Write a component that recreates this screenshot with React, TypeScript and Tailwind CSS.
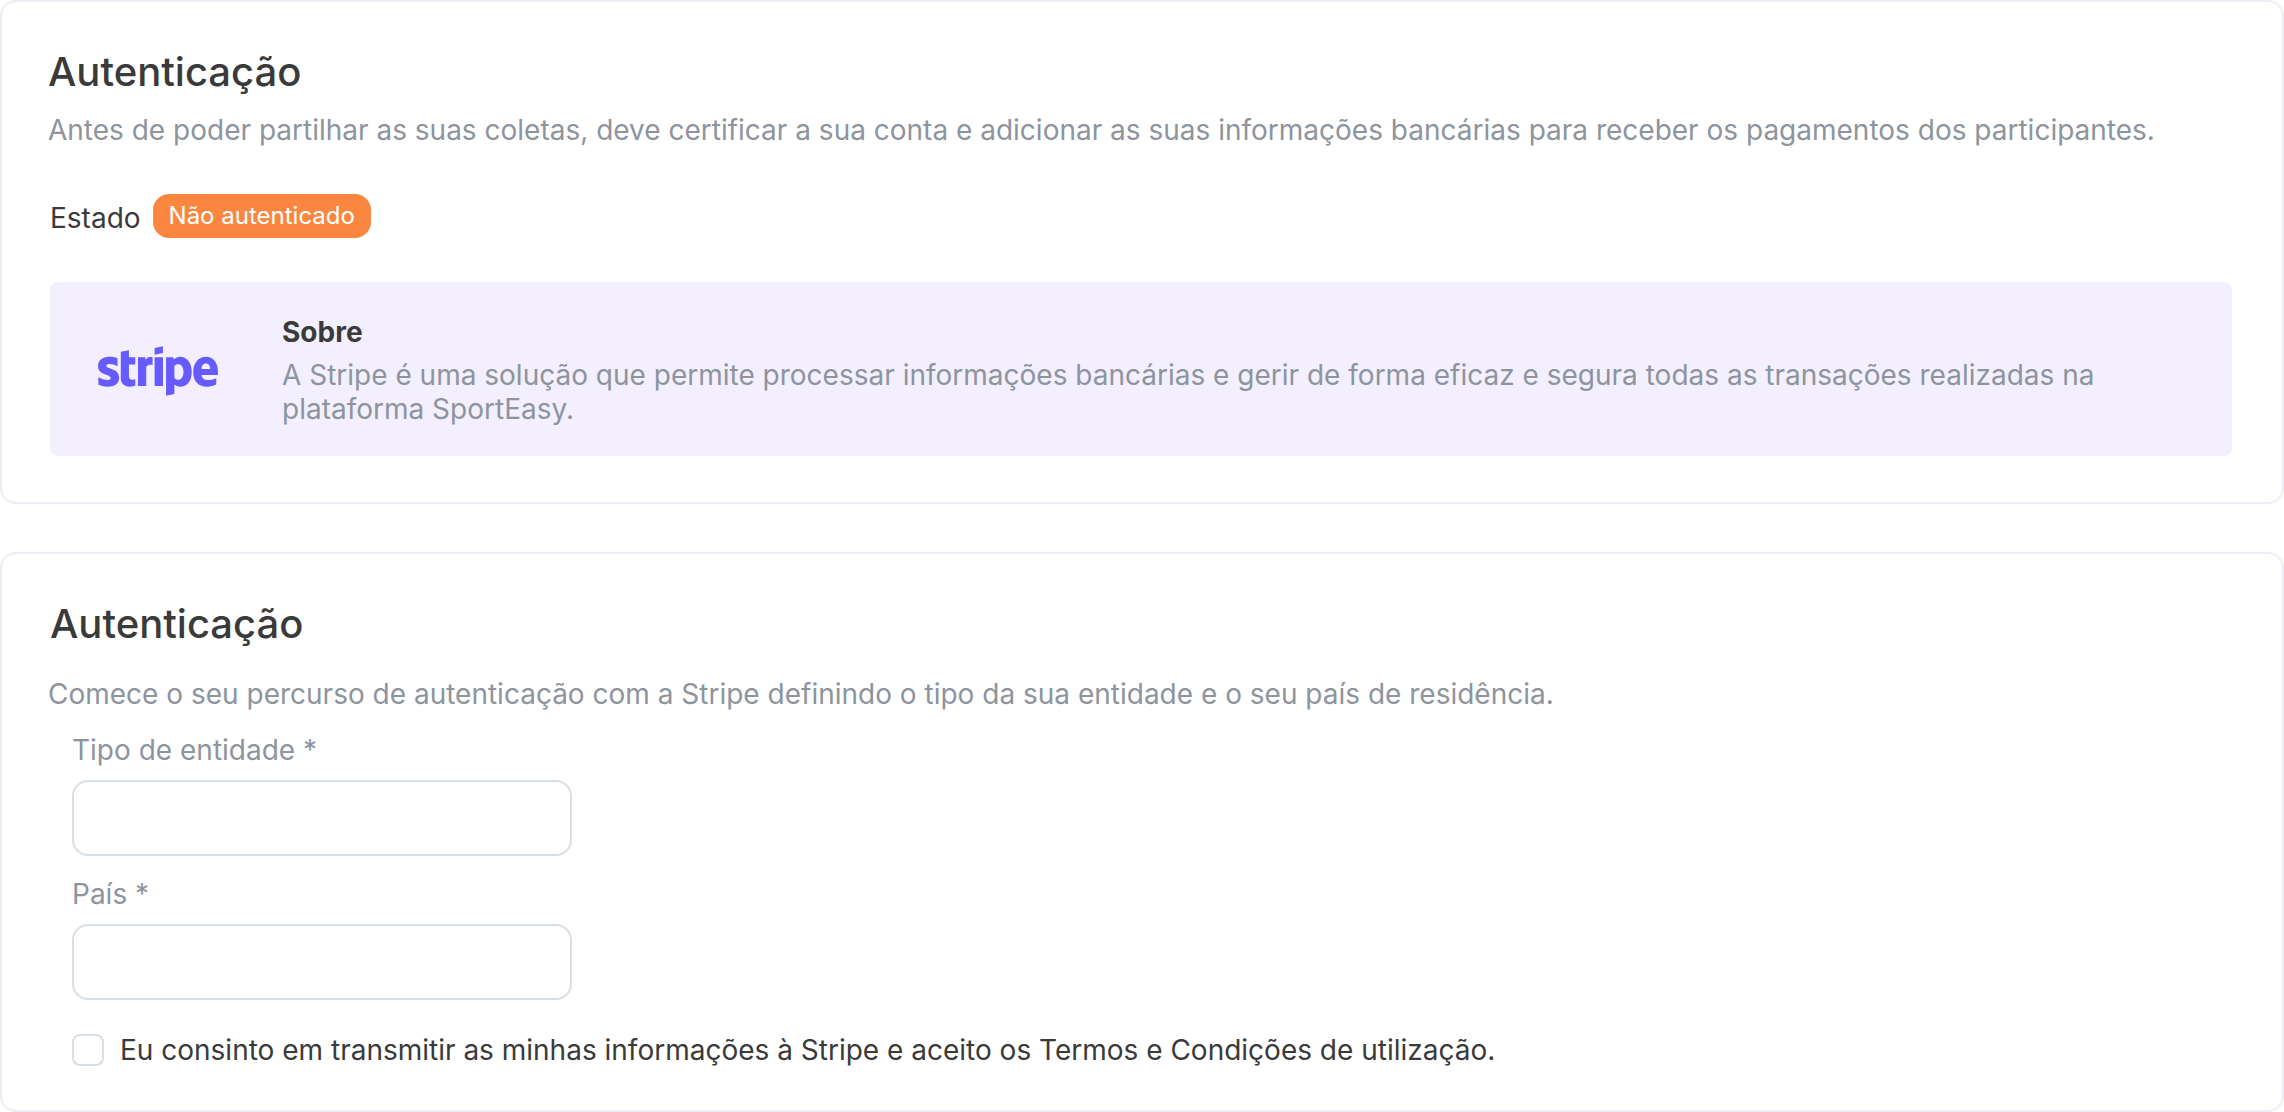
import React from "react";
import { FaStripe } from "react-icons/fa6";

const Field = ({ id, label }: { id: string; label: string }) => {
  return (
    <div className="flex flex-col gap-3">
      <label htmlFor={id} className="text-[28px] leading-9 text-[#8d949d]">
        {label}
      </label>
      <input
        id={id}
        type="text"
        className="h-19 w-125 max-w-full rounded-2xl border-2 border-[#d8dee6] bg-white px-5 text-[28px] text-[#3a3a3a]"
      />
    </div>
  );
};

const StatusCard = () => {
  return (
    <section className="rounded-2xl border-2 border-[#ebeff3] p-[46px] pr-12">
      <h2 className="text-[40px] leading-12 font-medium">Autenticação</h2>
      <p className="mt-3.5 text-[28px] leading-10 text-[#8d949d]">
        Antes de poder partilhar as suas coletas, deve certificar a sua conta e
        adicionar as suas informações bancárias para receber os pagamentos dos
        participantes.
      </p>
      <div className="mt-11 flex flex-col gap-11 px-0.5">
        <div className="flex items-end gap-3">
          <span className="text-[28px] leading-10">Estado</span>
          <span className="rounded-2xl bg-[#fb863f] px-4 py-1 text-2xl leading-9 text-white">
            Não autenticado
          </span>
        </div>
        <div className="flex items-center rounded-lg bg-[#f3effe] px-12 pt-8 pb-[30px]">
          <FaStripe className="mt-0.5 h-24 w-30 shrink-0 text-[#665bff]" />
          <div className="ml-16">
            <h3 className="text-[28px] leading-9 font-bold">Sobre</h3>
            <p className="mt-2 text-[28px] leading-[34px] text-[#8d949d]">
              A Stripe é uma solução que permite processar informações bancárias
              e gerir de forma eficaz e segura todas as transações realizadas na
              plataforma SportEasy.
            </p>
          </div>
        </div>
      </div>
    </section>
  );
};

const EntityCard = () => {
  return (
    <section className="rounded-2xl border-2 border-[#ebeff3] p-[46px] pb-11">
      <h2 className="px-0.5 text-[40px] leading-12 font-medium">
        Autenticação
      </h2>
      <p className="mt-6.5 text-[28px] leading-10 text-[#8d949d]">
        Comece o seu percurso de autenticação com a Stripe definindo o tipo da
        sua entidade e o seu país de residência.
      </p>
      <form className="mt-4.5 flex flex-col gap-5 px-6">
        <Field id="entity" label="Tipo de entidade *" />
        <Field id="country" label="País *" />
        <div className="mt-3.5 flex items-center gap-4">
          <input
            id="consent"
            type="checkbox"
            className="size-8 shrink-0 appearance-none rounded-lg border-2 border-[#d8dee6] bg-white checked:bg-[#665bff]"
          />
          <label htmlFor="consent" className="text-[28px] leading-8">
            Eu consinto em transmitir as minhas informações à Stripe e aceito os
            Termos e Condições de utilização.
          </label>
        </div>
      </form>
    </section>
  );
};

const App = () => {
  return (
    <main className="flex flex-col gap-12 bg-white font-[Inter,sans-serif] text-[#3a3a3a]">
      <StatusCard />
      <EntityCard />
    </main>
  );
};

export default App;
